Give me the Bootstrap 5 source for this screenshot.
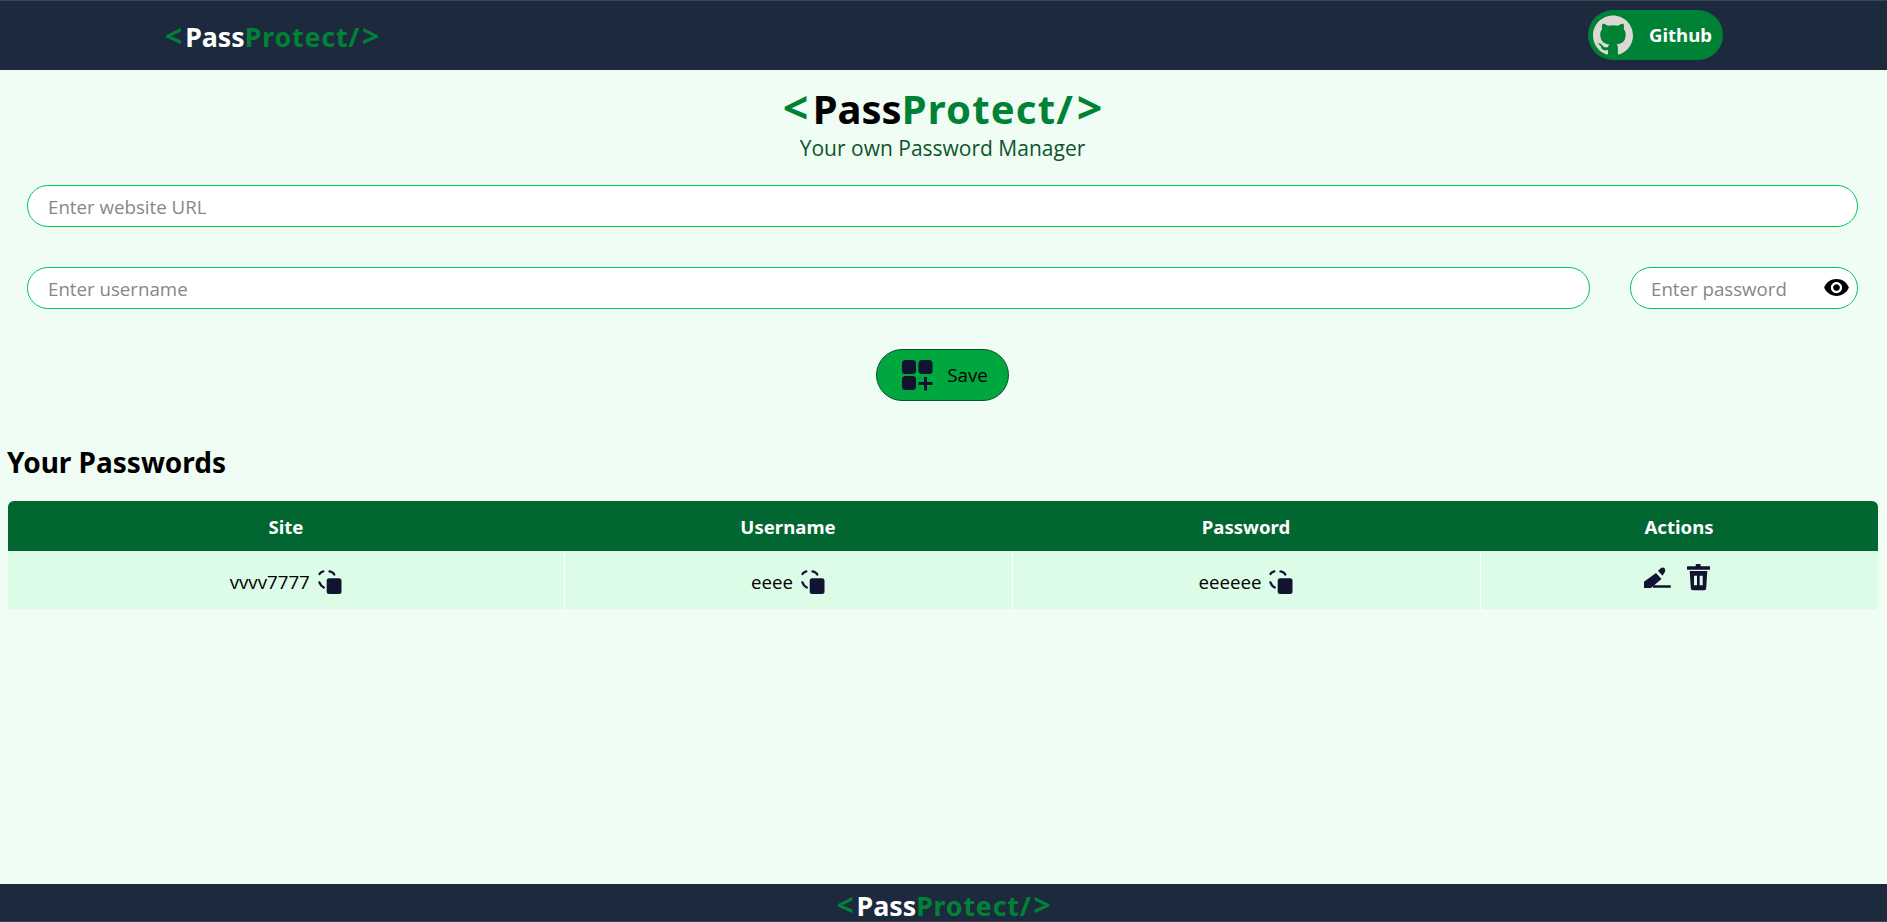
<!DOCTYPE html>
<html lang="en">
<head>
<meta charset="utf-8">
<title>PassProtect</title>
<link href="https://cdn.jsdelivr.net/npm/bootstrap@5.3.0/dist/css/bootstrap.min.css" rel="stylesheet">
<style>
html,body{height:100%}
body{background:#f0fdf4;font-family:"Open Sans","Noto Sans",sans-serif;color:#000;font-size:18.7px;overflow:hidden}
.pp-shell{height:922px}
.pp-nav{background:#1d293d;height:70px;padding:0;border-top:1px solid #3b4656;flex:none}
.pp-nav-inner{width:100%;padding-left:165px;padding-right:164px}
.logo-txt{font-family:"Noto Sans","Open Sans",sans-serif;font-weight:700;line-height:1;white-space:nowrap}
.logo-txt .ang{color:#008236;font-size:1.12em;line-height:.8;margin:0 .06em}
.logo-txt .ang:first-child{margin-left:0;margin-right:.1em}
.logo-txt .ang:last-child{margin-right:0}
.logo-txt .prot{color:#008236;letter-spacing:.03em}
.logo-sm{font-size:26.8px;color:#fff}
.logo-nav{margin-top:3px}
.logo-lg{font-size:40px;color:#000}
.git-btn{background:#008236;color:#fff;height:50px;width:135px;padding:0 0 0 5px;gap:16px;border:0;margin-bottom:2px}
.git-btn:hover{background:#008236;color:#fff}
.git-btn span{font-weight:700;font-size:18.6px;font-family:"Noto Sans",sans-serif}
.pp-main{flex:1 1 auto;padding:0 9px 0 7px}
.pp-head{padding-top:19px;height:115px}
.tagline{color:#0d542b;font-size:21px;line-height:28px;margin-top:5px}
.pp-form{padding:0 20px;gap:40px}
.pp-field{height:42px;border:1px solid #00c950;border-radius:21px;padding:4px 20px;font-size:18.7px;color:#000;background:#fff}
.pp-field::placeholder{color:#8a8686}
.pp-field:focus{border-color:#00c950;box-shadow:none}
.pw-wrap{width:228px;flex:none}
.pw-wrap .pp-field{padding-right:40px}
.pw-eye{position:absolute;right:8px;top:7px;width:27px;height:27px}
.pp-row{gap:40px}
.save-btn{background:#00a63e;border:1px solid #0d542b;color:#000;height:52px;width:133px;gap:14px;padding:0 0 0 4px;font-size:18.7px}
.save-btn:hover{background:#00a63e;color:#000;border-color:#0d542b}
.sec-title{font-size:28px;font-weight:700;line-height:36px;margin:43px 0 21px;font-family:"Noto Sans",sans-serif}
.pp-wrap{border-radius:6px;overflow:hidden;margin-left:1px}
.pp-table{margin:0;table-layout:fixed;width:100%;text-align:center;--bs-table-bg:transparent;border-collapse:collapse}
.pp-table th{background:#016630;color:#fff;height:50px;padding:2px 0 0;font-size:18.6px;vertical-align:middle;border:0;box-shadow:none;font-family:"Noto Sans",sans-serif}
.pp-table td{background:#dcfce7;height:59px;padding:0;vertical-align:middle;border:1px solid #fff;border-width:0 1px 1px 0;box-shadow:none;font-size:18.7px;color:#000}
.pp-table td:last-child{border-right:0}
.c1{width:556px}.c2{width:448px}.c3{width:468px}
.cell-txt{padding-top:4px}
.cell-act{padding-bottom:6px;padding-right:4px}
.ic{color:#121331;flex:none}
.foot{background:#1d293d;height:38px;flex:none;border-bottom:1px solid #3b4656;padding-top:9px}
</style>
</head>
<body>
<div class="pp-shell d-flex flex-column">
  <nav class="navbar pp-nav">
    <div class="pp-nav-inner d-flex justify-content-between align-items-center">
      <div class="logo-txt logo-sm logo-nav"><span class="ang">&lt;</span>Pass<span class="prot">Protect/</span><span class="ang">&gt;</span></div>
      <a class="btn rounded-pill git-btn d-flex align-items-center" href="#">
        <svg width="40" height="40" viewBox="0 0 24 24" fill="#ddd8d2"><path d="M12 .297c-6.63 0-12 5.373-12 12 0 5.303 3.438 9.8 8.205 11.385.6.113.82-.258.82-.577 0-.285-.01-1.04-.015-2.04-3.338.724-4.042-1.61-4.042-1.61C4.422 18.07 3.633 17.7 3.633 17.7c-1.087-.744.084-.729.084-.729 1.205.084 1.838 1.236 1.838 1.236 1.07 1.835 2.809 1.305 3.495.998.108-.776.417-1.305.76-1.605-2.665-.3-5.466-1.332-5.466-5.93 0-1.31.465-2.38 1.235-3.22-.135-.303-.54-1.523.105-3.176 0 0 1.005-.322 3.3 1.23.96-.267 1.98-.399 3-.405 1.02.006 2.04.138 3 .405 2.28-1.552 3.285-1.23 3.285-1.23.645 1.653.24 2.873.12 3.176.765.84 1.23 1.91 1.23 3.22 0 4.61-2.805 5.625-5.475 5.92.42.36.81 1.096.81 2.22 0 1.606-.015 2.896-.015 3.286 0 .315.21.69.825.57C20.565 22.092 24 17.592 24 12.297c0-6.627-5.373-12-12-12"/></svg>
        <span>Github</span>
      </a>
    </div>
  </nav>
  <main class="pp-main">
    <div class="pp-head text-center">
      <div class="logo-txt logo-lg"><span class="ang">&lt;</span>Pass<span class="prot">Protect/</span><span class="ang">&gt;</span></div>
      <div class="tagline">Your own Password Manager</div>
    </div>
    <div class="pp-form d-flex flex-column align-items-stretch">
      <input class="form-control pp-field" placeholder="Enter website URL">
      <div class="d-flex pp-row">
        <input class="form-control pp-field flex-grow-1" placeholder="Enter username">
        <div class="position-relative pw-wrap">
          <input class="form-control pp-field" placeholder="Enter password">
          <svg class="pw-eye" viewBox="0 0 24 24" fill="#000"><path d="M12 4.500C7 4.500 2.730 7.610 1 12c1.730 4.390 6 7.500 11 7.500s9.270-3.110 11-7.500c-1.730-4.390-6-7.500-11-7.500zM12 17c-2.760 0-5-2.240-5-5s2.240-5 5-5 5 2.240 5 5-2.240 5-5 5zm0-8c-1.660 0-3 1.340-3 3s1.340 3 3 3 3-1.340 3-3-1.340-3-3-3z"/></svg>
        </div>
      </div>
      <div class="d-flex justify-content-center">
        <button class="btn rounded-pill save-btn d-flex align-items-center justify-content-center" type="button">
          <svg class="ic" width="32" height="32" viewBox="0 0 32 32" fill="currentColor"><rect x="1" y="1" width="14" height="14" rx="3.500"/><rect x="17.500" y="1" width="14" height="14" rx="3.500"/><rect x="1" y="17" width="14" height="14" rx="3.500"/><path d="M23 18h3v5h5.500v3H26v5.500h-3V26h-5.500v-3H23z"/></svg>
          <span>Save</span>
        </button>
      </div>
    </div>
    <h2 class="sec-title">Your Passwords</h2>
    <div class="pp-wrap">
      <table class="table pp-table">
        <colgroup><col class="c1"><col class="c2"><col class="c3"><col></colgroup>
        <thead><tr><th>Site</th><th>Username</th><th>Password</th><th>Actions</th></tr></thead>
        <tbody><tr>
          <td><div class="d-flex justify-content-center align-items-center gap-2 cell-txt"><span>vvvv7777</span><svg class="ic" width="24" height="24" viewBox="0 0 24 24"><use href="#cp"/></svg></div></td>
          <td><div class="d-flex justify-content-center align-items-center gap-2 cell-txt"><span>eeee</span><svg class="ic" width="24" height="24" viewBox="0 0 24 24"><use href="#cp"/></svg></div></td>
          <td><div class="d-flex justify-content-center align-items-center gap-2 cell-txt"><span>eeeeee</span><svg class="ic" width="24" height="24" viewBox="0 0 24 24"><use href="#cp"/></svg></div></td>
          <td><div class="d-flex justify-content-center align-items-center gap-3 cell-act">
            <svg class="ic" width="27" height="21" viewBox="0 0 27 21" fill="currentColor"><path d="M0 18V14.800L12 6 17.500 12 7 21H0z"/><path d="M14 3.800l3-2.800c1.200-.9 2.900-.6 3.700.5s.7 2.500 0 3.700l-2.200 3.600z"/><rect x="9" y="18.300" width="17.800" height="2.500" rx=".5"/></svg>
            <svg class="ic" width="23" height="27" viewBox="0 0 23 27" fill="currentColor"><rect x="8.700" y="0" width="5" height="4" rx="1"/><rect x="0" y="2.300" width="23" height="3.400" rx=".5"/><path fill-rule="evenodd" d="M2.700 7h17.600l-1.100 17.300a2 2 0 0 1-2 2H5.800a2 2 0 0 1-2-2zM7 11.700v9.600h3v-9.600zM12.700 11.700v9.600h3v-9.600z"/></svg>
          </div></td>
        </tr></tbody>
      </table>
    </div>
  </main>
  <footer class="foot text-center">
    <div class="logo-txt logo-sm"><span class="ang">&lt;</span>Pass<span class="prot">Protect/</span><span class="ang">&gt;</span></div>
  </footer>
</div>
<svg width="0" height="0" class="position-absolute">
  <defs>
    <g id="cp">
      <rect x="8.700" y="8.300" width="14.800" height="15.700" rx="2.500" fill="currentColor"/>
      <g fill="none" stroke="currentColor" stroke-width="2.300" stroke-linecap="round">
        <path d="M1.500 4Q2.500 2 5.300 1.300"/>
        <path d="M11.500 1.300Q14.800 1.700 16.300 4.500"/>
        <path d="M1.400 12.400Q2.500 15.800 5.800 17.500"/>
      </g>
    </g>
  </defs>
</svg>
<script src="https://cdn.jsdelivr.net/npm/bootstrap@5.3.0/dist/js/bootstrap.bundle.min.js"></script>
</body>
</html>
